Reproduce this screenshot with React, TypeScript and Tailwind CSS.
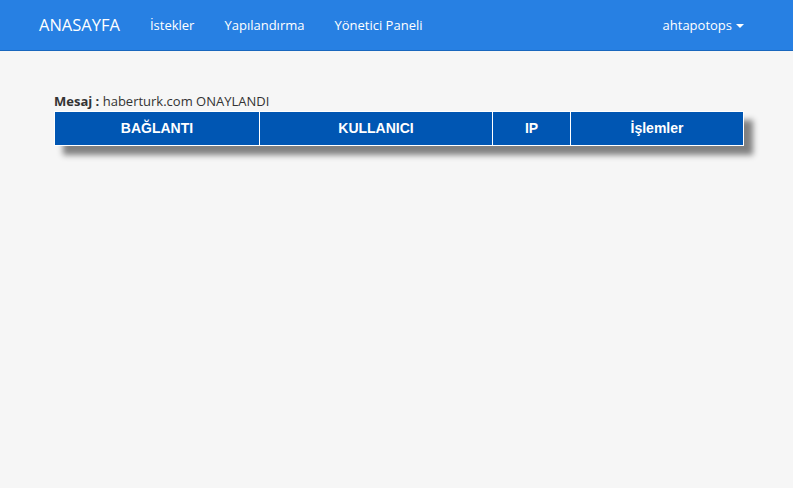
import React from 'react';

const navLinks = ['İstekler', 'Yapılandırma', 'Yönetici Paneli'];

const App = () => {
  return (
    <div className="min-h-[488px] w-full bg-[#f6f6f6]" style={{ fontFamily: '"Open Sans", "Noto Sans", sans-serif' }}>
      <nav className="flex h-[51px] items-center border-b border-[#1967be] bg-[#2780e3] pl-[24px] pr-[49px] text-white">
        <a href="#" className="px-[15px] text-[16.5px] leading-[20px]">
          ANASAYFA
        </a>
        <ul className="flex">
          {navLinks.map((l) => (
            <li key={l}>
              <a href="#" className="block px-[15px] text-[13px] leading-[20px]">
                {l}
              </a>
            </li>
          ))}
        </ul>
        <a href="#" className="ml-auto flex items-center gap-[4px] text-[13px] leading-[20px]">
          ahtapotops
          <span className="mt-[2px] inline-block h-0 w-0 border-x-[4px] border-t-[4px] border-x-transparent border-t-white" />
        </a>
      </nav>

      <main className="pl-[54px] pr-[49px] pt-[41px]">
        <p className="mb-[1px] text-[13px] leading-[18px] text-[#333]">
          <b>Mesaj :</b> haberturk.com ONAYLANDI
        </p>
        <table
          className="w-[690px] border-collapse border border-white bg-[#0056b3] text-white shadow-[9px_9px_6px_#808080]"
          style={{ fontFamily: '"Liberation Sans", Arial, sans-serif' }}
        >
          <thead>
            <tr className="h-[34px] text-[14px] font-bold">
              <th className="w-[205px] border-r border-white">BAĞLANTI</th>
              <th className="w-[233px] border-r border-white">KULLANICI</th>
              <th className="w-[78px] border-r border-white">IP</th>
              <th>İşlemler</th>
            </tr>
          </thead>
        </table>
      </main>
    </div>
  );
};

export default App;
